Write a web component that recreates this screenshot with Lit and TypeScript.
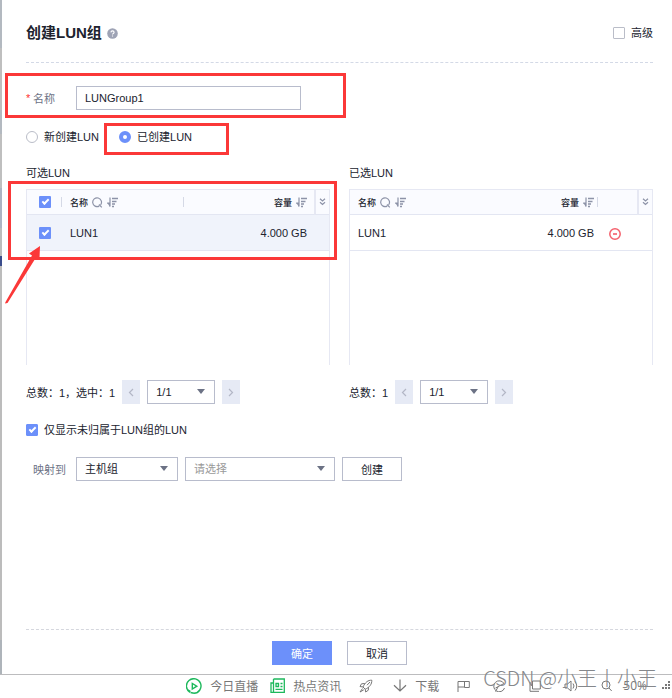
import { LitElement, html, svg, css, nothing } from "lit";
import { customElement, property } from "lit/decorators.js";

const searchIcon = html`<svg class="ico" width="11" height="11" viewBox="0 0 11 11" fill="none" stroke="#8d93a8" aria-hidden="true">
  <path d="M7.2 9.1A4.4 4.4 0 1 1 8.6 7.900M7 7.500L9.800 10.400" stroke-width="1.2" />
</svg>`;

const sortIcon = html`<svg class="ico" width="11" height="11" viewBox="0 0 11 11" fill="none" stroke="#8d93a8" aria-hidden="true">
  <path d="M3 .5V9.500M.4 6.500H3" stroke-width="1.2" />
  <path d="M0 5.500H3V10Z" fill="#8d93a8" stroke="none" />
  <path d="M5 1.500H11M5 4.500H9.500M5 7H8M5 9.500H7" stroke-width="1.5" />
</svg>`;

const moreIcon = html`<svg width="7" height="8" viewBox="0 0 7 8" fill="none" stroke="#8d93a8" aria-hidden="true">
  <path d="M1 .8L3.5 3L6 .8M1 4.3L3.5 6.5L6 4.3" stroke-width="1.2" />
</svg>`;

const removeIcon = html`<svg width="12" height="12" viewBox="0 0 12 12" fill="none" stroke="#f4606c" aria-hidden="true">
  <circle cx="6" cy="6" r="5.2" stroke-width="1.5" /><path d="M4 6H8" stroke-width="1.6" />
</svg>`;

const chevron = (d: string) => html`<svg width="6" height="9" viewBox="0 0 6 9" fill="none" stroke="#b3b7c6" aria-hidden="true"><path d=${d} stroke-width="1.2" /></svg>`;

@customElement("lun-table")
class LunTable extends LitElement {
  @property({ type: Boolean }) selectable = false;
  @property() caption = "";

  static styles = css`
    :host { display: block; }
    .title { font-size: 11px; line-height: 16px; margin: 0 0 8px; font-weight: 400; }
    .frame {
      border: 1px solid #e6e8f3;
      border-bottom: 0;
      height: 176px;
      box-sizing: border-box;
    }
    table { width: 100%; border-collapse: separate; border-spacing: 0; table-layout: fixed; }
    th, td { padding: 0; text-align: left; font-size: 11px; font-weight: 400; border-bottom: 1px solid #e3e6f2; }
    th { height: 24px; font-size: 9px; font-weight: 500; background: #fafbff; color: #20232e; }
    td { height: 35px; }
    .picked td { background: #f0f3fb; }
    .check { width: 35px; }
    .name { width: 122px; }
    .more { width: 13px; }
    .wide { width: 180px; }
    .act { width: 39px; }
    .cell { display: flex; align-items: center; height: 10px; padding: 0 6px 0 8px; gap: 4px; border-right: 1px solid transparent; white-space: nowrap; }
    th .cell { border-color: #d5d9e6; }
    th.last .cell, th.wide .cell, th.more .cell { border-color: transparent; }
    .end { justify-content: flex-end; }
    .tight { padding-right: 3px; }
    .center { justify-content: center; padding: 0; }
    .check .center { padding-left: 2px; }
    .more .center { border: 0; }
    th.more { border-left: 2px solid #e6e8f3; }
    .ico { flex: none; }
    input {
      appearance: none; width: 12px; height: 12px; margin: 0; border-radius: 1px;
      background: #6c90fa; display: grid; place-items: center; flex: none;
    }
    input::after {
      content: ""; border: solid #fff; border-width: 0 0 2px 2px;
      box-sizing: border-box; height: 4px; width: 7px; transform: rotate(-45deg); margin-bottom: 2px;
    }
    button { border: 0; background: none; padding: 0; display: flex; }
    .del { margin: 2px 0 0 11px; }
  `;

  render() {
    const s = this.selectable;
    return html`
      <h2 class="title">${this.caption}</h2>
      <div class="frame">
        <table aria-label=${this.caption}>
          <thead>
            <tr>
              ${s ? html`<th class="check"><div class="cell center"><input type="checkbox" checked aria-label="全选" /></div></th>` : nothing}
              <th class=${s ? "name" : "wide"}><div class="cell">名称${searchIcon}${sortIcon}</div></th>
              <th class=${s ? "last" : ""}><div class="cell end ${s ? "" : "tight"}">容量${sortIcon}</div></th>
              ${s ? nothing : html`<th class="act"></th>`}
              <th class="more"><div class="cell center"><button aria-label="列设置">${moreIcon}</button></div></th>
            </tr>
          </thead>
          <tbody>
            <tr class=${s ? "picked" : ""}>
              ${s ? html`<td class="check"><div class="cell center"><input type="checkbox" checked aria-label="LUN1" /></div></td>` : nothing}
              <td><div class="cell">LUN1</div></td>
              <td><div class="cell end ${s ? "" : "tight"}">4.000 GB</div></td>
              ${s ? nothing : html`<td><button class="del" aria-label="移除">${removeIcon}</button></td>`}
              <td></td>
            </tr>
          </tbody>
        </table>
      </div>
    `;
  }
}

@customElement("lun-pager")
class LunPager extends LitElement {
  @property() summary = "";

  static styles = css`
    :host { display: flex; align-items: center; gap: 7px; font-size: 11px; }
    .step { width: 18px; height: 24px; border: 0; padding: 0; background: #e6eaf5; display: grid; place-items: center; }
    .select { position: relative; display: flex; }
    .select::after {
      content: ""; position: absolute; right: 10px; top: 9px; pointer-events: none;
      border: solid transparent; border-width: 5px 4px 0; border-top-color: #6c7285;
    }
    select {
      appearance: none; width: 68px; height: 24px; border: 1px solid #b8bccc; border-radius: 0;
      background: #fff; padding: 0 8px; font: inherit; color: inherit;
    }
  `;

  render() {
    return html`
      <span>${this.summary}</span>
      <button class="step" aria-label="上一页">${chevron("M5 1L1.5 4.5L5 8")}</button>
      <span class="select"><select aria-label="页码"><option>1/1</option></select></span>
      <button class="step" aria-label="下一页">${chevron("M1 1L4.5 4.5L1 8")}</button>
    `;
  }
}

const barIcon = (w: number, h: number, body: unknown, color = "#777") =>
  html`<svg width=${w} height=${h} viewBox="0 0 ${w} ${h}" fill="none" stroke=${color} aria-hidden="true">${body}</svg>`;

@customElement("browser-status-bar")
class BrowserStatusBar extends LitElement {
  static styles = css`
    :host {
      display: flex; align-items: center; justify-content: flex-end; position: relative;
      height: 23px; box-sizing: border-box; font-size: 12px; color: #777; background: #fff;
      padding: 0 2px 2px 0; white-space: nowrap;
    }
    .item { display: flex; align-items: center; gap: 8px; margin-right: 12px; }
    .wide { margin-right: 18px; }
    .far { margin-right: 20px; }
    .tools { display: flex; align-items: center; gap: 23px; margin-right: 11px; }
    .zoom { font: 12px "Open Sans", "Noto Sans", sans-serif; margin-right: 14px; }
    .mark {
      position: absolute; right: 15px; top: -10px; line-height: 26px;
      font-family: "Noto Sans CJK SC", sans-serif; font-size: 20px;
      font-weight: 300; color: #85878b;
    }
  `;

  render() {
    return html`
      <span class="item">${barIcon(16, 16, svg`<path d="M4 14.3A7.3 7.3 0 1 1 8 15.3M1.5 11.5L4.5 13.5M6.3 5.5V11L10.8 8.2Z" stroke-width="1.4"/><path d="M4.5 14.5L8 15.3" stroke-width="1.4"/>`, "#1db85c")}今日直播</span>
      <span class="item wide">${barIcon(15, 15, svg`<path d="M3.5 1H14.3V14.3H1V5H3.500M3.500 1V14M6 5.500H8.500V8.500H6ZM10.500 5.500H12.500M10.500 8.500H12.500M5.500 11.300H12.500" stroke-width="1.3"/>`, "#1db85c")}热点资讯</span>
      <span class="item far">${barIcon(14, 14, svg`<path d="M12.8 1.2C9 1 6 3.5 4 8L6.2 10.2C10.5 8.5 13 5 12.8 1.2ZM5.7 4.5L2.5 4.8L1 7.5L4 8M9.5 8.3L9.3 11.2L6.7 13L6.2 10.2M3.5 9.5L1 13L4.8 10.8M11 3L8 6.2"/>`)}</span>
      <span class="item wide">${barIcon(14, 13, svg`<path d="M7 .5V12M1 6.2L7 12L13 6.2" stroke-width="1.2"/>`)}下载</span>
      <span class="tools">
        ${barIcon(13, 12, svg`<path d="M1 12V1.5H12.3V7.5H7.5V1.5M1 7H7.5"/>`)}
        ${barIcon(13, 13, svg`<path d="M2.5 9L11 4.5A5.5 5.5 0 1 0 11.5 9M2.5 12.5L5 8"/>`)}
        ${barIcon(12, 12, svg`<path d="M3.5 1H11.3V9H3.5ZM1 2V11.3H10"/>`)}
        ${barIcon(14, 12, svg`<path d="M1 4V8H3.5L7 11V1L3.5 4ZM9 3.5Q11 6 9 8.5M11 1.5Q14.5 6 11 10.5"/>`)}
        ${barIcon(11, 12, svg`<circle cx="5" cy="5" r="4"/><path d="M8 8L10.7 11"/>`)}
      </span>
      <span class="zoom">50%</span>
      ${barIcon(9, 9, svg`<path d="M7 1H9M7 4H9M7 7H9M4 4H6M4 7H6M1 7H3" stroke-width="2"/>`)}
      <span class="mark">CSDN @小王丨小王</span>
    `;
  }
}

@customElement("app-root")
class AppRoot extends LitElement {
  static styles = css`
    :host {
      display: flex; flex-direction: column; min-height: 100vh; box-sizing: border-box;
      font-family: "Liberation Sans", "Noto Sans CJK SC", sans-serif;
      font-size: 11px; color: #20232e; background: #fff;
    }
    .shell { flex: 1; display: flex; border-bottom: 1px solid #bcbcbe; }
    .edge {
      width: 2px;
      background: linear-gradient(#b3b9c0 48px, #bfbfbf 48px 110px, #b3b9c0 110px 134px, #bfbfbf 134px 188px,
        #adb4c4 188px 228px, #bcbcbc 228px 256px, #3b4d8c 256px 266px, #bcbcbc 266px 640px, #aeb4ba 640px);
    }
    .dialog { flex: 1; min-width: 0; display: flex; flex-direction: column; padding: 0 19px 0 24px; position: relative; }
    header { display: flex; align-items: center; padding: 20px 0 16px; line-height: 26px; border-bottom: 1px dashed #d3d9e6; }
    h1 { margin: 0; font-size: 15px; font-weight: 600; }
    .help { margin-left: 5px; }
    .advanced { margin-left: auto; }
    label { display: flex; align-items: center; }
    .opt { gap: 6px; line-height: 16px; }
    .row { display: flex; align-items: center; gap: 7px; }
    .name-row { margin-top: 23px; gap: 0; }
    .key { width: 43px; padding-left: 7px; color: #6c7285; }
    .key i { color: #f33; font-style: normal; width: 7px; margin-left: -7px; }
    .text { width: 225px; height: 24px; box-sizing: border-box; border: 1px solid #b8bccc; padding: 0 8px; font: inherit; color: inherit; }
    .modes { margin: 19px 0 20px; gap: 20px; height: 16px; }
    input[type="checkbox"], input[type="radio"] {
      appearance: none; box-sizing: border-box; width: 12px; height: 12px; margin: 0; flex: none;
      border: 1px solid #babdc8; background: #fff; display: grid; place-items: center;
    }
    input[type="checkbox"] { border-radius: 1px; }
    input[type="radio"] { border-radius: 50%; }
    input[type="radio"]:checked { border: 4px solid #6c90fa; }
    input[type="checkbox"]:checked { background: #6c90fa; border-color: #6c90fa; }
    input[type="checkbox"]:checked::after {
      content: ""; box-sizing: border-box; width: 7px; height: 4px; border: solid #fff; border-width: 0 0 2px 2px;
      transform: rotate(-45deg); margin-bottom: 2px;
    }
    .tables { display: grid; grid-template-columns: 1fr 1fr; column-gap: 19px; row-gap: 15px; }
    .only { margin-top: 18px; }
    .map { margin: 19px 0 20px; }
    .map .key { margin-right: -7px; }
    .select { position: relative; display: flex; }
    .select::after {
      content: ""; position: absolute; right: 10px; top: 9px; pointer-events: none;
      border: solid transparent; border-width: 5px 4px 0; border-top-color: #6c7285;
    }
    select { appearance: none; width: 102px; height: 24px; border: 1px solid #b8bccc; border-radius: 0; background: #fff; padding: 0 8px; font: inherit; color: inherit; }
    .long { width: 150px; color: #999; }
    .btn { width: 60px; height: 24px; border: 1px solid #b8bccc; background: #fff; padding: 0; font: inherit; color: inherit; }
    .primary { background: #6c90fa; border-color: #6c90fa; color: #fff; }
    footer { margin-top: auto; border-top: 1px dashed #d5d7de; padding: 11px 0 9px; display: flex; justify-content: center; gap: 15px; }
    .note { position: absolute; border: 3px solid #fb3838; box-sizing: border-box; pointer-events: none; }
    .n1 { left: 3px; top: 73px; width: 341px; height: 45px; }
    .n2 { left: 102px; top: 123px; width: 125px; height: 32px; }
    .n3 { left: 6px; top: 181px; width: 329px; height: 79px; }
    .arrow { position: absolute; left: 2px; top: 245px; pointer-events: none; }
  `;

  render() {
    return html`
      <div class="shell">
        <div class="edge"></div>
        <main class="dialog">
          <header>
            <h1>创建LUN组</h1>
            <svg class="help" width="11" height="11" viewBox="0 0 11 11" role="img" aria-label="帮助">
              <circle cx="5.5" cy="5.5" r="5.3" fill="#9ea3b5" />
              <path d="M3.9 4.4Q4 2.9 5.5 2.9T7.1 4.3Q7.1 5 6.3 5.4T5.5 6.6M5.5 7.5V8.6" fill="none" stroke="#fff" stroke-width="1.1" />
            </svg>
            <label class="opt advanced"><input type="checkbox" />高级</label>
          </header>

          <div class="row name-row">
            <label class="key" for="name"><i>*</i>名称</label>
            <input class="text" id="name" type="text" value="LUNGroup1" />
          </div>

          <div class="row modes">
            <label class="opt"><input type="radio" name="mode" />新创建LUN</label>
            <label class="opt"><input type="radio" name="mode" checked />已创建LUN</label>
          </div>

          <div class="tables">
            <lun-table caption="可选LUN" selectable></lun-table>
            <lun-table caption="已选LUN"></lun-table>
            <lun-pager summary="总数：1，选中：1"></lun-pager>
            <lun-pager summary="总数：1"></lun-pager>
          </div>

          <label class="opt only"><input type="checkbox" checked />仅显示未归属于LUN组的LUN</label>

          <div class="row map">
            <label class="key" for="target">映射到</label>
            <span class="select"><select id="target"><option>主机组</option></select></span>
            <span class="select"><select class="long" aria-label="请选择"><option>请选择</option></select></span>
            <button class="btn">创建</button>
          </div>

          <footer>
            <button class="btn primary">确定</button>
            <button class="btn">取消</button>
          </footer>

          <div class="note n1"></div>
          <div class="note n2"></div>
          <div class="note n3"></div>
          <svg class="arrow" width="36" height="60" viewBox="0 0 36 60" aria-hidden="true">
            <path d="M36 1L35.500 14L32 12.500L3.500 58L1 58.500L1.500 57L28 10.500L25 8.500Z" fill="#fb3838" />
          </svg>
        </main>
      </div>
      <browser-status-bar></browser-status-bar>
    `;
  }
}
